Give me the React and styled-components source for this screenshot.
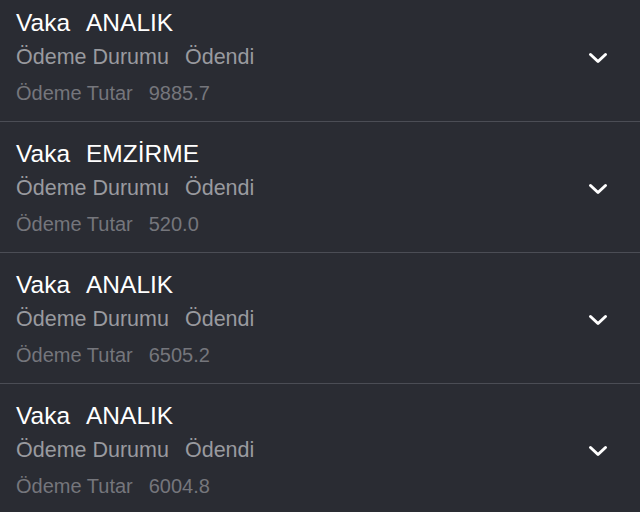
import React from 'react';
import styled, { createGlobalStyle } from 'styled-components';

const GlobalStyle = createGlobalStyle`
  * {
    box-sizing: border-box;
  }

  html, body {
    margin: 0;
    padding: 0;
    background: #2a2c33;
    font-family: "Liberation Sans", Arial, Helvetica, sans-serif;
    overflow: hidden;
  }
`;

const List = styled.div`
  /* list is scrolled a little, first row is cut at the top */
  margin-top: -9px;
  background: #2a2c33;
`;

const Row = styled.div`
  display: flex;
  align-items: center;
  height: 131px;
  padding: 16px 32px 10px 16px;
  border-bottom: 1px solid #4b4d55;
`;

const Info = styled.div`
  flex: 1;
  display: flex;
  flex-direction: column;
`;

const Line = styled.div`
  display: flex;
  font-size: ${p => p.size}px;
  line-height: ${p => p.lh}px;
  color: ${p => p.color};
  white-space: nowrap;
`;

const Value = styled.span`
  margin-left: 16px;
`;

const Toggle = styled.button`
  display: flex;
  align-items: center;
  justify-content: center;
  width: 20px;
  height: 20px;
  padding: 0;
  margin-top: -2px;
  border: none;
  background: none;
  cursor: pointer;
`;

const Chevron = () => (
  <svg width="20" height="14" viewBox="0 0 20 14">
    <polyline
      points="2.5,3.5 10,10.5 17.5,3.5"
      fill="none"
      stroke="#ffffff"
      strokeWidth="3"
      strokeLinecap="round"
      strokeLinejoin="round"
    />
  </svg>
);

const payments = [
  { type: 'ANALIK', status: 'Ödendi', amount: '9885.7' },
  { type: 'EMZİRME', status: 'Ödendi', amount: '520.0' },
  { type: 'ANALIK', status: 'Ödendi', amount: '6505.2' },
  { type: 'ANALIK', status: 'Ödendi', amount: '6004.8' },
];

const App = () => {
  return (
    <>
      <GlobalStyle />
      <List>
        {payments.map((p, i) => (
          <Row key={i}>
            <Info>
              <Line size={24.5} lh={33} color="#ffffff">
                Vaka<Value>{p.type}</Value>
              </Line>
              <Line size={21.5} lh={36} color="#999a9f">
                Ödeme Durumu<Value>{p.status}</Value>
              </Line>
              <Line size={20} lh={37} color="#75767c">
                Ödeme Tutar<Value>{p.amount}</Value>
              </Line>
            </Info>
            <Toggle>
              <Chevron />
            </Toggle>
          </Row>
        ))}
      </List>
    </>
  );
};

export default App;
